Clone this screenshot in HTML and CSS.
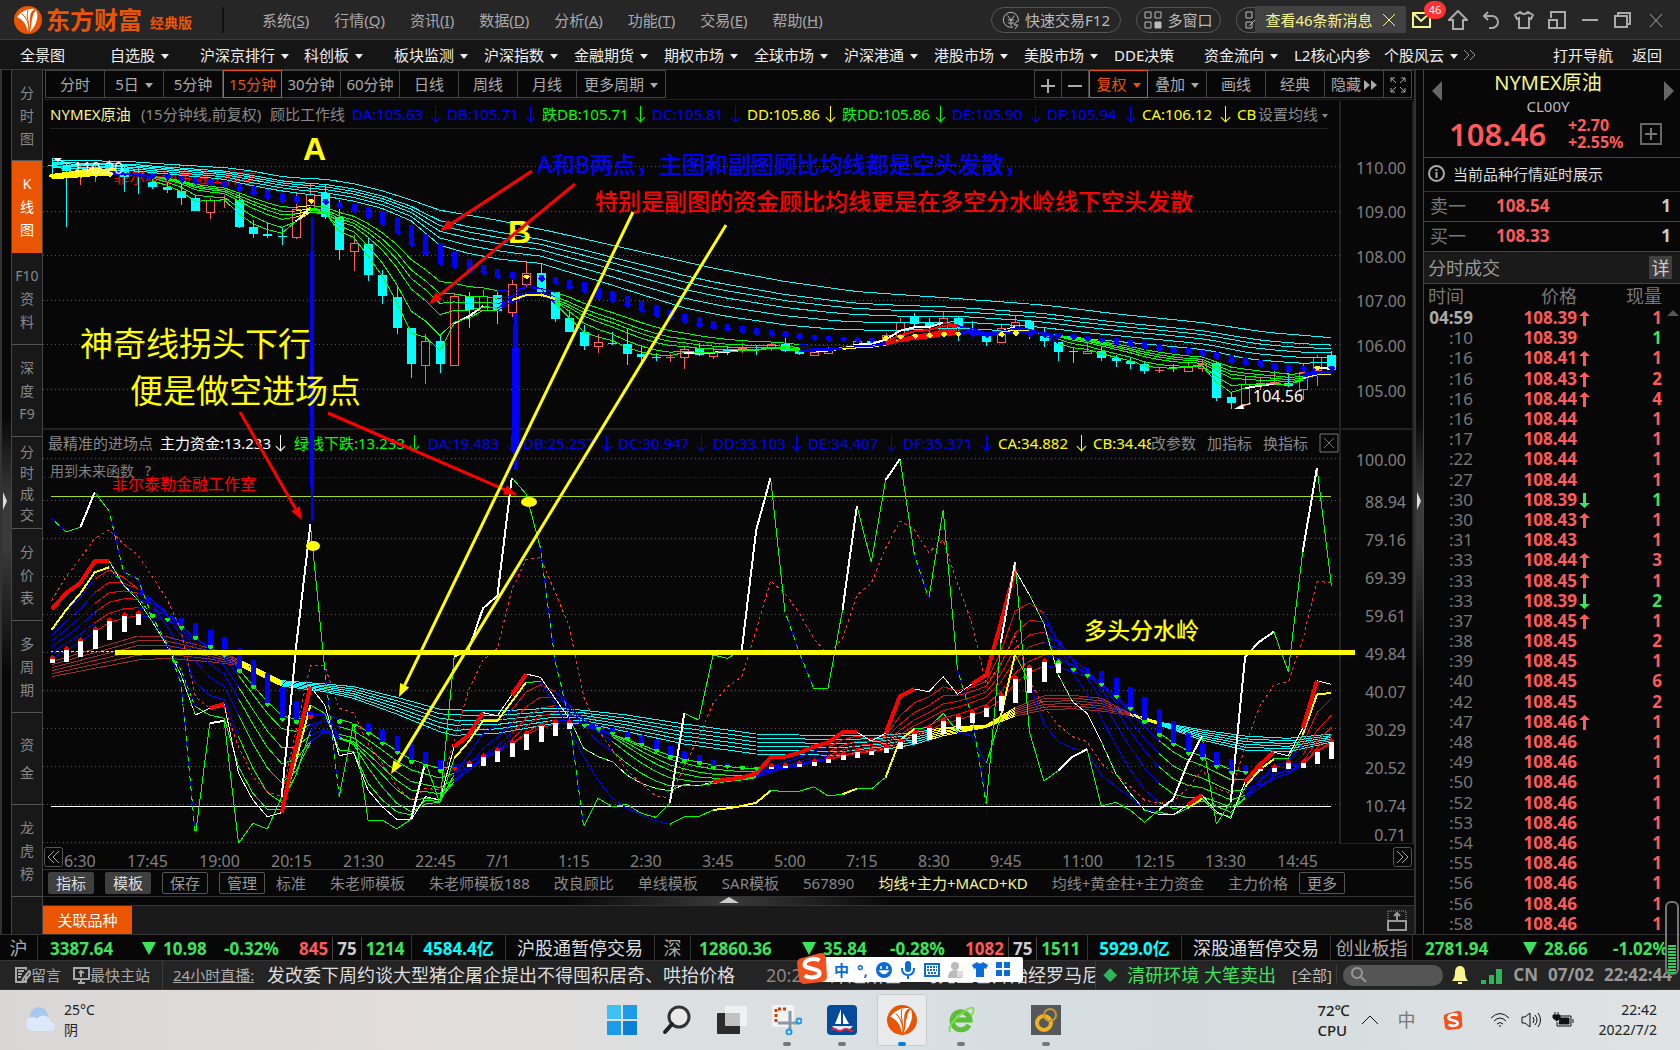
FILE: index.html
```html
<!DOCTYPE html>
<html lang="zh-CN">
<head>
<meta charset="utf-8">
<title>东方财富经典版 - NYMEX原油</title>
<link rel="stylesheet" href="styles.css">
</head>
<body>
<svg class="defs" aria-hidden="true">
  <symbol id="flame" viewBox="0 0 28 28"><ellipse cx="14" cy="14" rx="14" ry="14" fill="#ea5504"/><path d="M3 11C8 5 14 2 21 3c-4 2-5 5-5 10 0 5 0 9-2 13-2-7-3-11-11-15z" fill="#fff"/><path d="M8 8c5 4 7 9 7 18M14 4c-2 6 1 12 1 20" stroke="#ea5504" stroke-width="1" fill="none"/><path d="M22 4c3 5 1 15-6 22 2-8 1-16 6-22z" fill="#fff"/></symbol>
  <symbol id="sogou" viewBox="0 0 30 30"><path d="M4 6 23 1q4 0 5 4l1 18q0 4-4 5L8 30q-4 0-5-4L1 11q0-4 3-5z" fill="#f4511e"/><path d="M22 8C17 5 8 7 8 12c0 4 14 3 14 8 0 4-9 5-14 2" fill="none" stroke="#fff" stroke-width="4"/></symbol>
</svg>

<header class="titlebar">
  <div class="brand"><svg width="28" height="28"><use href="#flame"/></svg><b>东方财富</b><span>经典版</span></div>
  <nav class="menus">
    <a href="#">系统(<u>S</u>)</a><a href="#">行情(<u>Q</u>)</a><a href="#">资讯(<u>I</u>)</a><a href="#">数据(<u>D</u>)</a><a href="#">分析(<u>A</u>)</a><a href="#">功能(<u>T</u>)</a><a href="#">交易(<u>E</u>)</a><a href="#">帮助(<u>H</u>)</a>
  </nav>
  <div class="tools">
    <button class="pill trade"><svg width="18" height="18" viewBox="0 0 18 18"><path d="M11 16A7.500 7.500 0 1 1 16 11M5.500 4.500 9 9l3.500-4.500M9 9v6M6 9h6M6 12h6M15 10l-3 4h4l-3 4"/></svg>快速交易F12</button>
    <button class="pill multi"><svg width="18" height="18" viewBox="0 0 18 18"><path d="M1 1h6v6H1zM11 1h6v6h-6zM1 11h6v6H1z"/><path d="M11 11h6v6h-6z" fill="#bbb"/></svg>多窗口</button>
    <button class="pill more" aria-label="布局"><svg width="18" height="18" viewBox="0 0 18 18"><path d="M1 1h6v6H1zM1 11h6v6H1zM4 15l6-6"/></svg></button>
    <div class="toast">查看46条新消息<button aria-label="关闭"><svg width="14" height="14" viewBox="0 0 14 14"><path d="M1 1l12 12M13 1L1 13"/></svg></button></div>
    <button class="ic mail" aria-label="消息"><svg width="20" height="20" viewBox="0 0 20 20"><path d="M1 3h17v14H1zM1 3l8 8 9-8"/></svg><i>46</i></button>
    <button class="ic" aria-label="主页"><svg width="20" height="20" viewBox="0 0 20 20"><path d="M10 1 1 10h4v9h10v-9h4z"/></svg></button>
    <button class="ic" aria-label="返回"><svg width="20" height="20" viewBox="0 0 20 20"><path d="M7 2 3 6l4 4M3 6h8a6 6 0 0 1 0 12H8"/></svg></button>
    <button class="ic" aria-label="皮肤"><svg width="20" height="20" viewBox="0 0 20 20"><path d="M6 2 1 5l2 4 2-1v10h10V8l2 1 2-4-5-3q-4 4-8 0z"/></svg></button>
    <button class="ic" aria-label="小窗"><svg width="20" height="20" viewBox="0 0 20 20"><path d="M4 8V2h14v16h-8M2 10h8v8H2z"/></svg></button>
    <button class="ic" aria-label="最小化"><svg width="20" height="20" viewBox="0 0 20 20"><path d="M2 10h16"/></svg></button>
    <button class="ic" aria-label="还原"><svg width="20" height="20" viewBox="0 0 20 20"><path d="M2 6h12v11H2zM5 6V3h12v11h-3"/></svg></button>
    <button class="ic thin" aria-label="关闭"><svg width="20" height="20" viewBox="0 0 20 20"><path d="M4 4l12 13M16 4L4 17"/></svg></button>
  </div>
</header>

<nav class="navbar">
  <a href="#">全景图</a><a href="#" class="dd">自选股</a><a href="#" class="dd wide">沪深京排行</a><a href="#" class="dd">科创板</a><a href="#" class="dd">板块监测</a><a href="#" class="dd">沪深指数</a><a href="#" class="dd">金融期货</a><a href="#" class="dd">期权市场</a><a href="#" class="dd">全球市场</a><a href="#" class="dd">沪深港通</a><a href="#" class="dd">港股市场</a><a href="#" class="dd">美股市场</a><a href="#">DDE决策</a><a href="#" class="dd">资金流向</a><a href="#">L2核心内参</a><a href="#" class="dd fit">个股风云</a>
  <svg width="14" height="12" viewBox="0 0 14 12"><path d="M1 1l5 5-5 5M7 1l5 5-5 5" fill="none" stroke="#999"/></svg>
  <span class="navright"><a href="#">打开导航</a><a href="#">返回</a></span>
</nav>

<main class="desk">
  <div class="strip"></div>
  <aside class="side">
    <a href="#">分<br>时<br>图</a><a href="#" class="on">K<br>线<br>图</a><a href="#">F10<br>资<br>料</a><a href="#">深<br>度<br>F9</a><a href="#" class="four">分<br>时<br>成<br>交</a><a href="#">分<br>价<br>表</a><a href="#">多<br>周<br>期</a><a href="#" class="two">资<br>金</a><a href="#">龙<br>虎<br>榜</a>
  </aside>
  <section class="work">
    <div class="periods">
      <div class="group"><button>分时</button><button class="dd">5日</button><button>5分钟</button><button class="on">15分钟</button><button>30分钟</button><button>60分钟</button><button>日线</button><button>周线</button><button>月线</button><button class="dd big">更多周期</button></div>
      <div class="group"><button class="sq" aria-label="放大"><svg width="16" height="16" viewBox="0 0 16 16"><path d="M1 8h14M8 1v14"/></svg></button><button class="sq" aria-label="缩小"><svg width="16" height="16" viewBox="0 0 16 16"><path d="M1 8h14"/></svg></button><button class="on dd">复权</button><button class="dd">叠加</button><button>画线</button><button>经典</button><button>隐藏<svg class="ff" width="13" height="12" viewBox="0 0 13 12"><path d="M0 1l6 5-6 5zM7 1l6 5-6 5z"/></svg></button><button class="sq" aria-label="全屏"><svg width="18" height="18" viewBox="0 0 18 18"><path d="M2 6V2h4M2 2l5 5M12 2h4v4M16 2l-5 5M2 12v4h4M2 16l5-5M12 16h4v-4M16 16l-5-5"/></svg></button></div>
    </div>
    <div class="chart">
      <div class="legend main">
        <span class="name">NYMEX原油</span><span class="desc">(15分钟线,前复权)</span><span class="desc">顾比工作线</span>
        <span class="v b">DA:105.63<i></i></span><span class="v b">DB:105.71<i></i></span><span class="v g w">跌DB:105.71<i></i></span><span class="v b">DC:105.81<i></i></span><span class="v y">DD:105.86<i></i></span><span class="v g w">跌DD:105.86<i></i></span><span class="v b">DE:105.90<i></i></span><span class="v b">DF:105.94<i></i></span><span class="v y">CA:106.12<i></i></span><span class="v y cut">CB</span>
        <button class="dd">设置均线</button>
      </div>
      <div class="legend sub">
        <span class="desc">最精准的进场点</span><span class="v wh x">主力资金:13.233<i></i></span><span class="v g x">绿线下跌:13.233<i></i></span><span class="v b">DA:19.483<i></i></span><span class="v b">DB:25.257<i></i></span><span class="v b">DC:30.947<i></i></span><span class="v b">DD:33.103<i></i></span><span class="v b">DE:34.407<i></i></span><span class="v b">DF:35.371<i></i></span><span class="v y">CA:34.882<i></i></span><span class="v y cut">CB:34.48</span>
        <button>改参数</button><button>加指标</button><button>换指标</button><button class="close" aria-label="关闭指标"><svg width="20" height="20" viewBox="0 0 20 20"><path d="M1 1h18v18H1zM5 5l10 10M15 5L5 15" fill="none" stroke="#777"/></svg></button>
      </div>
      <svg id="chart" viewBox="43 100 1371 769"></svg>
    </div>
    <div class="templates">
      <button class="fill">指标</button><button class="fill">模板</button><button>保存</button><button>管理</button>
      <div class="tabs"><a href="#">标准</a><a href="#">朱老师模板</a><a href="#">朱老师模板188</a><a href="#">改良顾比</a><a href="#">单线模板</a><a href="#">SAR模板</a><a href="#">567890</a><a href="#" class="on">均线+主力+MACD+KD</a><a href="#">均线+黄金柱+主力资金</a><a href="#">主力价格</a></div>
      <button>更多</button>
    </div>
    <div class="split"><svg width="20" height="6" viewBox="0 0 20 6"><path d="M0 6 10 0l10 6z" fill="#ccc"/></svg></div>
    <div class="related"><button>关联品种</button><svg width="20" height="21" viewBox="0 0 20 21"><path d="M1 11h18v9H1zM10 10V3M7 6l3-3 3 3" fill="none" stroke="#999" stroke-width="2"/><path d="M1 10V1h18v9" fill="none" stroke="#999" stroke-dasharray="1 1"/></svg></div>
  </section>
  <div class="strip right"></div>
  <aside class="quote">
    <div class="head">
      <button class="tri l" aria-label="上一个"></button>
      <div class="title"><strong>NYMEX原油</strong><span>CL00Y</span></div>
      <button class="tri r" aria-label="下一个"></button>
      <div class="price"><b>108.46</b><span>+2.70<br>+2.55%</span><button aria-label="加自选"><svg width="22" height="22" viewBox="0 0 22 22"><path d="M1 1h20v20H1z" fill="none" stroke="#666" stroke-width="2"/><path d="M5 11h12M11 5v12" stroke="#777" stroke-width="2"/></svg></button></div>
    </div>
    <div class="info"><svg width="17" height="17" viewBox="0 0 17 17"><circle cx="8.500" cy="8.500" r="7.500"/><path d="M8.500 7v6M8.500 4v2"/></svg>当前品种行情延时展示</div>
    <div class="lvl"><span>卖一</span><b>108.54</b><em>1</em></div>
    <div class="lvl"><span>买一</span><b>108.33</b><em>1</em></div>
    <div class="bar">分时成交<button>详</button></div>
    <table class="ticks"><thead><tr><th>时间</th><th>价格</th><th>现量</th></tr></thead><tbody id="ticks"></tbody></table>
    <i class="up"></i>
  </aside>
</main>

<section class="ticker">
  <span class="mk first">沪</span>
  <div class="idx a"><b class="pt">3387.64</b><b class="chg">10.98</b><b class="pct">-0.32%</b><b class="cnt"><i class="r">845</i><i class="n">75</i><i>1214</i></b></div>
  <span class="amt">4584.4亿</span><span class="hk">沪股通暂停交易</span>
  <span class="mk">深</span>
  <div class="idx b"><b class="pt">12860.36</b><b class="chg">35.84</b><b class="pct">-0.28%</b><b class="cnt"><i class="r">1082</i><i class="n">75</i><i>1511</i></b></div>
  <span class="amt">5929.0亿</span><span class="hk">深股通暂停交易</span>
  <span class="mk cyb">创业板指</span>
  <div class="idx c"><b class="pt">2781.94</b><b class="chg">28.66</b><b class="pct">-1.02%</b></div>
</section>

<section class="news">
  <a href="#" class="ico"><svg width="17" height="17" viewBox="0 0 17 17"><path d="M12 9v6H2V1h10v2M4 4h6M4 7h4M4 10h3M15 4l-6 8-1 3 3-1 6-8z"/></svg>留言</a>
  <a href="#" class="ico"><svg width="17" height="17" viewBox="0 0 17 17"><path d="M1 1h15v11H1zM5 16h7M8 12v4M8 10V4M6 6l2-2 3 2"/></svg>最快主站</a>
  <div class="feed"><a href="#" class="live">24小时直播:</a><a href="#">发改委下周约谈大型猪企屠企提出不得囤积居奇、哄抬价格</a><span class="tm">20:24</span><a href="#" class="nx">泽连斯基：乌克兰已开始经罗马尼</a></div>
  <div class="alert"><i>◆</i><a href="#">清研环境 大笔卖出</a><a href="#" class="all">[全部]</a></div>
  <label class="find"><svg width="16" height="16" viewBox="0 0 16 16"><circle cx="6" cy="6" r="5"/><path d="M10 10l5 5"/></svg><input type="text" aria-label="搜索"></label>
  <svg class="bell" width="18" height="20" viewBox="0 0 18 20"><path d="M1 16q3-3 3-9 0-5 4-6h2q4 1 4 6 0 6 3 9zM7 17h4v2H7z" fill="#f5f58c"/></svg>
  <svg class="sig" width="22" height="20" viewBox="0 0 22 20"><path d="M0 15h5v4H0zM8 10h5v9H8zM15 4h6v15h-6z" fill="#2fb55a"/></svg>
  <b>CN</b><b>07/02</b><b class="clock">22:42:44</b>
  <div class="ime"><svg class="lg" width="32" height="32"><use href="#sogou"/></svg><b>中</b><b>°,</b>
    <svg width="16" height="16" viewBox="0 0 16 16"><circle cx="8" cy="8" r="8" fill="#0a6cd6"/><path d="M4 9q4 5 8 0zM5 4v3M11 4v3" fill="#fff" stroke="#fff" stroke-width="1.500"/></svg>
    <svg width="16" height="18" viewBox="0 0 16 18"><rect x="5" y="0" width="6" height="11" rx="3" fill="#0a6cd6"/><path d="M2 7q0 7 6 7t6-7M8 14v4" fill="none" stroke="#0a6cd6" stroke-width="2"/></svg>
    <svg width="16" height="14" viewBox="0 0 16 14"><path d="M1 1h14v12H1z" fill="none" stroke="#0a6cd6" stroke-width="2"/><path d="M3 4h10M3 7h10M4 10h8" stroke="#0a6cd6" stroke-width="2" stroke-dasharray="2 1"/></svg>
    <svg width="16" height="16" viewBox="0 0 16 16"><circle cx="7" cy="4" r="4" fill="#bbb"/><path d="M0 16q0-8 7-8t7 8z" fill="#bbb"/><path d="M9 9h6v6H9z" fill="#ddd"/></svg>
    <svg width="16" height="15" viewBox="0 0 16 15"><path d="M5 0 0 3l2 4 2-1v9h8V6l2 1 2-4-5-3q-3 3-6 0z" fill="#0a6cd6"/></svg>
    <svg width="15" height="15" viewBox="0 0 15 15"><path d="M0 0h6v6H0zM8 0h6v6H8zM0 8h6v6H0zM8 8h6v6H8z" fill="#0a6cd6"/></svg>
  </div>
  <svg class="meter" width="14" height="74" viewBox="0 0 14 74"><rect x="1" y="1" width="12" height="72" rx="5" fill="#111" fill-opacity=".6" stroke="#777" stroke-width="2"/><path d="M7 44v28" stroke="#2fd05a" stroke-width="8" stroke-dasharray="2 1"/></svg>
</section>

<footer class="taskbar">
  <div class="weather"><svg width="32" height="32" viewBox="0 0 32 32"><circle cx="14" cy="12" r="9" fill="#a9c8f0"/><path d="M8 27a7 7 0 0 1 0-14q3 0 4 2 3-5 9-3 5 2 4 6 5 0 5 4 0 5-5 5z" fill="#dbe9fb"/></svg><span>25°C<br>阴</span></div>
  <div class="apps">
    <button aria-label="开始"><svg width="30" height="30" viewBox="0 0 30 30"><path d="M0 0h14v14H0z" fill="#3fc0f5"/><path d="M16 0h14v14H16zM0 16h14v14H0z" fill="#1c9be8"/><path d="M16 16h14v14H16z" fill="#0a7fd8"/></svg></button>
    <button aria-label="搜索"><svg width="30" height="30" viewBox="0 0 30 30"><circle cx="17" cy="12" r="10" fill="#e9e9e9" stroke="#333" stroke-width="3"/><path d="M10 19 3 27" stroke="#222" stroke-width="4" stroke-linecap="round"/></svg></button>
    <button aria-label="任务视图"><svg width="30" height="30" viewBox="0 0 30 30"><rect x="0" y="8" width="23" height="21" rx="1" fill="#2b2b2b"/><rect x="8" y="1" width="22" height="20" rx="1" fill="#f6f6f6" opacity=".75"/></svg></button>
    <button class="run" aria-label="截图工具"><svg width="30" height="30" viewBox="0 0 30 30"><rect width="22" height="22" rx="3" fill="#f3f3f3"/><path d="M4 17V4h12" fill="none" stroke="#d83b01" stroke-width="3" stroke-dasharray="3 2"/><path d="M18 6v19M6 18h20" stroke="#8a98a5" stroke-width="3"/><circle cx="27" cy="16" r="2.500" fill="none" stroke="#1c9be8" stroke-width="2"/><circle cx="17" cy="27" r="2.500" fill="none" stroke="#1c9be8" stroke-width="2"/></svg></button>
    <button class="run" aria-label="帆船"><svg width="30" height="30" viewBox="0 0 30 30"><rect width="30" height="30" rx="4" fill="#064a9c"/><path d="M14 4v15H8zM16 8l6 11h-6z" fill="#fff"/><path d="M5 21h21l-4 4H9z" fill="#dfe9f5"/><path d="M4 25q3-2 6 0t6 0 6 0 4 0" fill="none" stroke="#e0223a" stroke-width="2"/></svg></button>
    <button class="run active" aria-label="东方财富"><svg width="30" height="30"><use href="#flame"/></svg></button>
    <button class="run" aria-label="浏览器"><svg width="30" height="30" viewBox="0 0 30 30"><path d="M23 20A9 9 0 1 1 24 15H7" fill="none" stroke="#5bbf3a" stroke-width="5"/><path d="M4 27Q1 21 14 10 24 1 27 3q2 2-2 8" fill="none" stroke="#8bd85a" stroke-width="2"/></svg></button>
    <button class="run last" aria-label="金融终端"><svg width="30" height="30" viewBox="0 0 30 30"><path d="M0 0h30v30H0z" fill="#54585c"/><circle cx="13" cy="18" r="7" fill="none" stroke="#f2b21b" stroke-width="4"/><circle cx="19" cy="10" r="6" fill="none" stroke="#c99a2a" stroke-width="2"/></svg></button>
  </div>
  <div class="tray">
    <span class="cpu">72℃<br>CPU</span>
    <svg width="18" height="12" viewBox="0 0 18 12"><path d="M1 10l8-8 8 8"/></svg>
    <span class="zh">中</span>
    <svg class="so" width="20" height="20"><use href="#sogou"/></svg>
    <svg width="20" height="16" viewBox="0 0 20 16"><path d="M1 6q9-9 18 0M4 9q6-6 12 0M7 12q3-3 6 0M9 14h2"/></svg>
    <svg width="20" height="18" viewBox="0 0 20 18"><path d="M1 6h3l5-4v14l-5-4H1zM12 6q2 3 0 6M14 4q4 5 0 10M17 2q5 7 0 14"/></svg>
    <svg width="22" height="16" viewBox="0 0 22 16"><path d="M7 4h12v10H5v-4M3 0v4M6 0v4M21 7v4"/><path d="M1 3h7v3l-3 3-4-3zM8 6h9v6H7z" fill="#111"/></svg>
    <span class="date">22:42<br>2022/7/2</span>
  </div>
</footer>
<script src="chart.js"></script>
</body>
</html>
```
FILE: styles.css
```css
* { box-sizing: border-box; }
body { margin: 0; background: #070707; color: #aaa; font: 15px/20px "Noto Sans", "Noto Sans CJK SC", sans-serif; overflow-x: hidden; }
button { font: inherit; color: inherit; background: none; border: 0; padding: 0; margin: 0; white-space: nowrap; }
a { color: inherit; text-decoration: none; white-space: nowrap; }
i, em { font-style: normal; }
svg { flex: none; }
.defs { position: absolute; width: 0; height: 0; }
.dd::after { content: ""; display: inline-block; border: 4px solid transparent; border-top: 5px solid currentColor; border-bottom: 0; margin-left: 6px; vertical-align: 2px; }

/* title bar */
.titlebar { display: flex; align-items: center; height: 40px; background: #262626; border-bottom: 1px solid #3c3c3c; padding-left: 14px; }
.brand { display: flex; align-items: center; gap: 4px; width: 210px; color: #ea5504; height: 26px; border-right: 2px solid #111; }
.brand b { font-size: 24px; }
.brand span { font-size: 14px; font-weight: bold; margin: 6px 0 0 4px; }
.menus { display: flex; gap: 25px; padding-left: 38px; color: #aaa; }
.tools { display: flex; align-items: center; margin-left: auto; padding-right: 14px; color: #bbb; }
.tools svg { fill: none; stroke: #aaa; stroke-width: 2; }
.tools .thin svg { stroke-width: 1; }
.tools .pill svg { stroke: #bbb; stroke-width: 1; }
.pill { display: flex; align-items: center; justify-content: center; gap: 5px; height: 26px; border: 1px solid #555; border-radius: 13px; margin-right: 15px; }
.trade { width: 130px; }
.multi { width: 85px; }
.more { width: 19px; padding-left: 8px; border-right: 0; border-radius: 13px 0 0 13px; margin-right: 0; overflow: hidden; justify-content: flex-start; }
.toast { display: flex; align-items: center; justify-content: center; gap: 9px; width: 151px; height: 27px; background: #424242; color: #f5f58c; margin-right: 6px; }
.tools .toast svg { stroke: #f5f58c; stroke-width: 1; display: block; }
.ic { width: 20px; height: 20px; margin-right: 13px; position: relative; }
.ic:last-child { margin-right: 0; }
.ic svg { display: block; }
.mail { margin-right: 16px; }
.tools .mail svg { stroke: #f5f58c; }
.mail i { position: absolute; left: 12px; top: -9px; width: 22px; height: 18px; border-radius: 9px; background: #f33; color: #fff; font-size: 11px; line-height: 18px; }

/* market navigation */
.navbar { display: flex; align-items: center; height: 30px; background: #151515; border-bottom: 1px solid #3c3c3c; color: #eee; padding: 1px 18px 0 20px; }
.navbar > a { flex: 0 0 90px; }
.navbar > a.wide { flex-basis: 104px; }
.navbar > a.fit { flex-basis: 79px; }
.navright { display: flex; gap: 19px; margin-left: auto; }

/* workspace */
.desk { display: grid; grid-template-columns: 11px 32px minmax(0, 1fr) 9px 257px; }
.strip { background: linear-gradient(#070707 40%, #3a3a3a 50%, #3a3a3a 55%, #070707 70%); border-left: 2px solid #333; position: relative; }
.strip::after { content: ""; position: absolute; left: 1px; top: calc(50% - 10px); border: 9px solid transparent; border-left: 4px solid #ddd; border-right: 0; }
.side { background: #181818; border: solid #444; border-width: 0 1px; font-size: 14px; color: #888; }
.side a { display: block; height: 92px; padding-top: 11px; line-height: 23px; text-align: center; border-bottom: 1px solid #555; }
.side a:first-child { height: 91px; }
.side .on { background: #ea5504; color: #fff; border-color: #ea5504; }
.side .four { line-height: 21px; padding-top: 4px; }
.side .two { line-height: 28px; padding-top: 18px; }
.work { display: flex; flex-direction: column; min-width: 0; }
.periods { display: flex; justify-content: space-between; height: 30px; padding: 0 2px; border-bottom: 1px solid #222; color: #aaa; }
.group { display: flex; height: 28px; border: 1px solid #444; }
.group button { width: 59px; border-right: 1px solid #444; }
.group button:last-child { border-right: 0; }
.group .big { width: 88px; }
.group .sq { width: 27px; }
.group .on { color: #ea5504; border: 1px solid #ea5504; margin: -1px 0; }
.group svg { stroke: #aaa; stroke-width: 2; fill: none; vertical-align: middle; }
.group .ff { fill: #aaa; stroke: none; margin-left: 3px; vertical-align: -1px; }
.group .sq:last-child svg { stroke-width: 1; }

.chart { position: relative; }
.chart > svg { display: block; width: 100%; height: auto; position: relative; pointer-events: none; }
.legend { position: absolute; left: 7px; right: 86px; display: flex; align-items: center; white-space: nowrap; }
.legend.main { top: 0; height: 29px; border-bottom: 1px solid #222; }
.legend.sub { left: 5px; right: 75px; top: calc(100% - 437px); height: 22px; }
.name { color: #f5f58c; width: 91px; }
.desc { color: #888; margin-right: 7px; }
.main .desc:nth-child(2) { width: 122px; }
.v { flex: 0 0 95px; display: flex; align-items: center; justify-content: space-between; padding-right: 6px; }
.v.w { flex-basis: 110px; }
.v.x { flex-basis: 134px; padding-right: 8px; }
.v i { width: 1px; height: 16px; background: currentColor; position: relative; margin-right: 5px; }
.v i::after { content: ""; position: absolute; left: -3px; bottom: 1px; width: 6px; height: 6px; border: solid currentColor; border-width: 0 1px 1px 0; transform: rotate(45deg); }
.b { color: #00f; } .g { color: #0f0; } .y { color: #ff0; } .wh { color: #fff; }
.v.cut { flex: 1 1 0; min-width: 0; overflow: hidden; padding: 0; }
.legend button { color: #888; }
.legend.main .dd::after { border-width: 4px 3px 0; margin-left: 4px; }
.legend.sub button { margin-right: 11px; }
.legend.sub .close { margin-right: 0; height: 20px; }
#chart text { font-family: "Noto Sans", "Noto Sans CJK SC", sans-serif; font-size: 16px; }
#chart .cap { font-family: "Liberation Sans", sans-serif; font-weight: bold; font-size: 32px; }
#chart .note { font-size: 23px; font-weight: 500; }
#chart .shout { font-size: 33px; }
#chart .small { font-size: 14px; }

.templates { display: flex; align-items: center; height: 28px; border: solid #333; border-width: 1px 0; padding-left: 5px; gap: 11px; color: #888; }
.templates button { width: 46px; height: 22px; border: 1px solid #555; border-radius: 2px; color: #999; line-height: 18px; }
.templates .fill { background: #3f3f3f; border-color: #3f3f3f; color: #ddd; }
.tabs { display: flex; gap: 24px; }
.tabs .on { color: #f5f58c; }
.split { height: 8px; display: flex; justify-content: center; align-items: flex-start; background: linear-gradient(90deg, #070707 38%, #3a3a3a 50%, #070707 62%); }
.related { display: flex; justify-content: space-between; align-items: center; height: 29px; background: #1a1a1a; border-top: 1px solid #333; padding-right: 7px; }
.related button { width: 89px; height: 28px; background: #ea5504; color: #fff; }

/* quote panel */
.quote { border-left: 1px solid #444; display: flex; flex-direction: column; position: relative; }
.head { display: grid; grid-template-columns: 10px 1fr 10px; align-items: center; height: 88px; padding: 1px 6px 0 8px; border-bottom: 1px solid #444; }
.title { text-align: center; line-height: 22px; padding-right: 10px; }
.title strong { display: block; font-weight: normal; font-size: 20px; line-height: 24px; color: #f5f58c; }
.title span { color: #bbb; }
.tri { width: 10px; height: 20px; background: #666; align-self: start; margin-top: 10px; clip-path: polygon(100% 0, 0 50%, 100% 100%); }
.tri.r { clip-path: polygon(0 0, 100% 50%, 0 100%); }
.price { grid-column: 1 / -1; display: flex; align-items: center; height: 40px; padding: 0 12px 6px 17px; color: #ff5a5a; }
.price b { font-size: 31px; width: 119px; font-weight: 600; line-height: 30px; }
.price span { font-size: 16px; line-height: 17px; font-weight: bold; margin-right: auto; }
.price button, .price svg { display: block; }
.info { display: flex; align-items: center; gap: 8px; height: 34px; padding: 0 0 2px 4px; color: #ddd; border-bottom: 1px solid #333; }
.info svg { fill: none; stroke: #aaa; stroke-width: 2; }
.lvl { display: flex; align-items: center; height: 30px; padding: 0 9px 2px 6px; border-bottom: 1px solid #444; font-size: 18px; color: #777; }
.lvl span { width: 66px; }
.lvl b { font-size: 17px; color: #ff5a5a; }
.lvl em { margin-left: auto; font-size: 17px; font-weight: bold; color: #ccc; }
.bar { display: flex; justify-content: space-between; align-items: center; height: 32px; padding: 0 8px 0 4px; background: #1a1a1a; border-bottom: 1px solid #444; font-size: 18px; color: #999; }
.bar button { width: 23px; height: 23px; background: #3f3f3f; color: #ccc; line-height: 22px; }
.ticks { flex: 1; border-collapse: collapse; width: 100%; font-size: 17px; line-height: 20px; table-layout: fixed; }
.ticks th { font-size: 18px; font-weight: normal; color: #777; height: 24px; padding: 0; text-align: right; }
.ticks td { position: relative; padding: 0; text-align: right; font-weight: bold; color: #ff5a5a; }
.ticks tr > :first-child { width: 49px; font-weight: normal; color: #777; }
.ticks tr > :nth-child(2) { width: 104px; }
.ticks tr > :last-child { padding-right: 18px; }
.ticks th:first-child { padding-right: 9px; }
.ticks tbody tr:first-child td:first-child { font-weight: bold; color: #aaa; }
.ticks .dn { color: #3de35c; }
.ticks svg { position: absolute; left: 106px; top: 3px; }
.up { position: absolute; right: 1px; top: 240px; border: 6px solid transparent; border-bottom-color: #555; border-top: 0; }

/* index ticker */
.ticker { display: flex; height: 27px; border: solid #333; border-width: 1px 0; font-size: 17px; color: #3de35c; line-height: 27px; white-space: nowrap; overflow: hidden; }
.ticker > * { border-right: 1px solid #333; flex: none; }
.mk { width: 36px; font-size: 18px; color: #aaa; text-align: center; }
.first { width: 38px; }
.cyb { width: 82px; }
.idx { display: flex; padding-left: 12px; }
.idx.a { width: 374px; } .idx.b { width: 397px; padding-left: 8px; color: inherit; } .idx.c { flex: 1 0 0; border: 0; }
.pt { width: 92px; }
.b .pt { width: 103px; }
.chg { width: 82px; }
.b .chg { width: 88px; }
.c .pt { width: 98px; } .c .chg { width: 90px; }
.chg::before { content: ""; display: inline-block; border: 7px solid transparent; border-top: 13px solid; border-bottom: 0; margin-right: 7px; }
.pct { width: 75px; }
.cnt i + i { border-left: 1px solid #444; margin-left: 4px; padding-left: 4px; }
.cnt .r { color: #ff5a5a; } .cnt .n { color: #ccc; }
.amt { width: 94px; color: #0ff; font-weight: bold; text-align: center; }
.hk { width: 149px; font-size: 18px; color: #ddd; text-align: center; }

/* news line */
.news { position: relative; display: flex; align-items: center; height: 29px; background: #242424; border-bottom: 1px solid #333; color: #aaa; padding-left: 14px; font-size: 17px; }
.ico { display: flex; align-items: center; font-size: 15px; margin-right: 12px; }
.ico svg { fill: none; stroke: #aaa; stroke-width: 2; }
.feed { flex: 1 1 0; min-width: 0; height: 28px; display: flex; align-items: center; overflow: hidden; border: solid #3c3c3c; border-width: 0 1px; padding-left: 10px; font-size: 18px; color: #ddd; }
.live { font-size: 15px; width: 94px; text-decoration: underline; color: #aaa; flex: none; }
.feed .tm { color: #888; margin: 0 18px 0 31px; }
.alert { display: flex; align-items: center; width: 241px; padding-left: 7px; margin-right: 6px; border-right: 1px solid #3c3c3c; color: #3de35c; font-size: 18px; }
.alert i { width: 24px; font-size: 14px; color: #2fb55a; }
.all { font-size: 15px; color: #bbb; margin-left: 16px; }
.find { display: flex; align-items: center; width: 100px; height: 21px; border-radius: 10px; background: #555; padding-left: 8px; }
.find svg { fill: none; stroke: #999; stroke-width: 2; }
.find input { width: 70px; border: 0; background: none; color: #ddd; outline: 0; }
.bell { margin: 0 12px 0 8px; }
.news > b { margin-left: 10px; color: #999; }
.news .clock { width: 76px; }
.ime { position: absolute; left: 815px; top: -4px; width: 208px; height: 25px; background: #fff; border-radius: 2px; display: flex; align-items: center; gap: 8px; padding-left: 19px; color: #0a6cd6; }
.ime .lg { position: absolute; left: -19px; top: -5px; }
.ime b { font-size: 15px; }
.meter { position: absolute; right: 1px; bottom: 14px; }

/* desktop taskbar */
.taskbar { display: grid; grid-template-columns: 1fr auto 1fr; align-items: center; height: 60px; background: linear-gradient(90deg, #d9d7d6, #e2dddb 25%, #dae0e3 50%, #d4dcdf 70%, #e0e2e3); color: #222; line-height: 20px; }
.weather { display: flex; align-items: center; gap: 7px; padding-left: 25px; font-size: 14px; }
.apps { display: flex; padding-right: 12px; }
.apps button { width: 55px; height: 52px; display: flex; align-items: center; justify-content: center; position: relative; }
.run::after { content: ""; position: absolute; bottom: 0; width: 8px; height: 4px; border-radius: 2px; background: #777; }
.apps .active { background: #e8eaeb; border-radius: 4px; box-shadow: inset 0 0 0 1px #ccc; width: 50px; margin: 0 7px; }
.apps .last { margin-left: 30px; }
.active.run::after { background: #0a7fd8; }
.tray { display: flex; align-items: center; justify-content: flex-end; gap: 11px; padding-right: 23px; font-size: 14px; }
.tray svg { fill: none; stroke: #111; stroke-width: 1; }
.tray .so { stroke: none; margin: 0 16px; }
.cpu { font-size: 15px; font-weight: 500; }
.zh { font-size: 18px; color: #777; margin-left: 8px; }
.date { text-align: right; margin-left: 14px; }
```
FILE: chart.js
```js
// Bar spacing of both panes and the two vertical scales.
const X = i => 51.6 + 14.38 * i;
const U = p => 100 + p / 3;
const L = p => 430 + p / 3;
const out = [];
const add = s => out.push(s);
const line = (x1, y1, x2, y2, c, w = 1, extra = '') =>
  add(`<path d="M${x1.toFixed(1)} ${y1.toFixed(1)}L${x2.toFixed(1)} ${y2.toFixed(1)}" fill="none" stroke="${c}" stroke-width="${w}" ${extra}/>`);
const poly = (pts, c, w = 1, extra = '') =>
  add(`<path d="M${pts.map(p => p[0].toFixed(1) + ' ' + p[1].toFixed(1)).join('L')}" fill="none" stroke="${c}" stroke-width="${w}" stroke-linejoin="bevel" ${extra}/>`);
const rect = (x, y, w, h, fill, extra = '') =>
  add(`<rect x="${x}" y="${y}" width="${w}" height="${h}" fill="${fill}" ${extra}/>`);
const text = (x, y, s, fill, cls = '', extra = '') =>
  add(`<text x="${x}" y="${y}" fill="${fill}" class="${cls}" ${extra}>${s}</text>`);
const seg = (arr, a, b, map, c, w, extra) => {
  const pts = [];
  for (let i = a; i <= b; i++) pts.push([X(i), map(arr[i])]);
  poly(pts, c, w, extra);
};
const interp = (pts, x) => {
  for (let k = 1; k < pts.length; k++) if (x <= pts[k][0]) {
    const [a, b] = [pts[k - 1], pts[k]];
    return a[1] + (b[1] - a[1]) * (x - a[0]) / (b[0] - a[0]);
  }
  return pts[pts.length - 1][1];
};
const ema = (src, n, seed) => {
  const k = 2 / (n + 1), r = [];
  src.forEach((v, i) => r.push(i ? r[i - 1] + k * (v - r[i - 1]) : seed));
  return r;
};
const parse = s => s.split(/\s+/).map(t => t.split(',').map(Number));

add('<g shape-rendering="crispEdges">');
// frame and grid
line(43, 428.5, 1413, 428.5, '#222', 2);
line(1339.5, 101, 1339.5, 844, '#222', 2);
line(1412.5, 101, 1412.5, 844, '#222', 2);
line(1340, 843.5, 1413, 843.5, '#222', 1);
[200, 334, 467, 601, 734, 869].forEach(p => line(43, Math.floor(U(p)) + .5, 1343, Math.floor(U(p)) + .5, '#555', 1, 'stroke-dasharray="1 3"'));
[85, 211, 325, 439, 553, 667, 781, 895, 1009, 1123, 1237].forEach(p => line(43, Math.floor(L(p)) + .5, 1343, Math.floor(L(p)) + .5, '#555', 1, 'stroke-dasharray="1 3"'));

text(113, 183, '菲尔泰勒金融工作室', '#f00');

// candles: kind (0 falling, 1 rising), high, top, bottom, low
const candles = parse(`0,175,195,198,232 0,190,197,213,380 1,195,205,225,255 1,195,200,220,245 0,180,188,215,225 0,195,205,232,275 0,205,218,223,282 0,235,245,262,266 0,250,261,270,278 0,250,273,293,315
0,285,293,333,333 1,295,300,335,357 1,285,297,300,323 0,280,300,381,384 0,360,381,402,413 0,367,402,407,415 0,385,408,410,434 1,280,328,410,416 1,250,283,327,335 0,253,279,351,357
0,300,351,450,480 1,405,430,452,513 0,412,432,525,543 0,511,525,588,612 0,560,591,684,702 0,684,684,792,834 1,702,724,794,852 0,705,724,792,819 1,580,587,794,797 0,576,587,630,684
1,570,587,630,632 0,576,585,632,672 1,540,553,635,651 1,486,520,553,560 0,490,519,575,590 0,575,577,656,665 0,630,655,696,696 0,675,696,738,749 1,702,727,739,758 0,696,728,732,735
0,686,732,762,795 0,735,762,770,783 0,760,770,773,783 1,763,770,773,786 1,742,748,772,806 0,729,745,764,768 1,745,755,767,776 0,738,750,753,765 1,730,745,748,758 0,738,747,750,765
1,729,733,745,753 0,714,733,753,755 0,745,753,762,766 1,745,755,764,765 1,740,748,758,760 1,735,740,745,748 1,718,722,738,740 0,718,722,730,735 1,700,706,725,728 1,655,665,706,708
0,638,648,672,685 0,655,670,680,695 1,636,655,690,695 0,648,655,685,722 0,662,690,693,700 0,700,708,725,738 1,672,685,725,727 1,645,665,690,700 0,660,663,695,717 0,685,708,723,741
0,725,727,755,783 0,745,753,756,788 1,725,753,758,760 0,740,753,774,783 0,765,774,783,800 0,770,783,792,807 0,785,792,813,822 1,800,810,814,820 0,792,802,805,816 1,785,802,812,815
1,780,792,803,815 0,788,790,894,903 0,878,891,909,927 1,830,852,911,911 1,833,850,855,870 1,810,846,851,855 0,820,848,858,862 1,790,817,866,900 1,765,770,810,858 0,753,765,810,810`);
candles.forEach(([up, hi, top, bot, lo], i) => {
  const x = Math.round(X(i)), c = up ? '#ff5f5f' : '#0ff';
  const y = Math.round(U(top)), h = Math.max(1, Math.round(U(bot)) - y);
  line(x + .5, U(hi), x + .5, U(lo), c);
  if (up && h > 1) rect(x - 3.5, y + .5, 8, h, '#070707', `stroke="${c}"`);
  else rect(x - 4, y, 9, h, c);
});

// long moving averages of the price
const hiPts = parse('51,181 107,183 132,185 168,193 225,203 250,212 286,232 325,238 352,250 382,272 411,300 439,330 496,360 560,400 614,437 714,505 786,545 857,575 921,588 1000,605 1050,617 1117,642 1200,667 1267,697 1331,713');
const loPts = parse('51,203 132,212 168,222 225,238 250,256 286,275 325,289 352,302 382,325 411,362 439,435 468,460 500,478 541,490 564,512 596,540 643,585 686,625 729,650 786,675 836,688 893,692 957,684 1033,697 1083,715 1167,738 1207,750 1250,778 1300,790 1331,787');
[0, .3, .44, .6, .79, 1].forEach(f => {
  const pts = [];
  for (let i = 0; i < 90; i++) { const a = interp(hiPts, X(i)), b = interp(loPts, X(i)); pts.push([X(i), U(a + (b - a) * f)]); }
  poly(pts, '#0ff');
});
// short moving averages of the price
const closes = candles.map(c => c[0] ? c[2] : c[3]);
const zones = [[0, 4, '#ff0', 2], [4, 7, '#00f', 1], [7, 17, '#0f0', 1], [17, 18, '#ff0', 1], [18, 31, '#0f0', 1], [31, 35, '#00f', 1], [35, 52, '#0f0', 1], [52, 58, '#00f', 1], [58, 63, '#f00', 2], [63, 70, '#00f', 1], [70, 87, '#0f0', 1], [87, 89, '#00f', 2]];
[3, 5, 8, 10, 12, 15].forEach((n, k) => {
  const e = ema(closes, n, 225 + k * 2);
  zones.forEach(z => seg(e, z[0], z[1], U, z[2], z[3]));
  if (k < 1) [[44, 48], [53, 62], [83, 85], [28, 30], [17, 18], [66, 67], [88, 89]].forEach(r => seg(e, r[0], r[1], U, '#fff', 2));
  if (k === 3) [[32, 35], [55, 59], [87, 89], [66, 68]].forEach(r => seg(e, r[0], r[1], U, '#ff0', 2));
});
poly([[51, U(228)], [80, U(222)], [115, U(207)]], '#ff0', 3);

// trend capsules: bar index, top, bottom
const caps = parse('5,218,226 6,220,228 7,222,235 8,223,238 9,228,245 10,235,252 11,238,255 12,243,262 13,252,272 14,258,285 15,267,297 16,280,305 17,288,308 19,297,313 20,305,325 21,312,335 22,322,355 23,334,375 24,352,402 25,376,438 26,402,465 27,430,495 28,457,505 29,478,515 30,496,522 31,508,535 32,517,538 34,525,543 35,531,552 36,540,567 37,546,580 38,565,597 39,573,607 40,588,622 41,603,637 42,616,650 43,630,658 44,642,670 45,652,680 46,663,686 47,672,692 48,678,698 49,684,705 50,690,708 51,694,710 52,700,716 53,706,721 54,709,724 55,710,724 56,711,725 57,713,727 64,697,709 65,698,712 68,694,708 69,696,710 70,698,712 71,703,716 72,708,722 73,713,727 74,714,735 75,720,740 76,726,746 77,733,752 78,740,758 79,745,763 80,750,768 81,757,778 82,766,790 83,770,796 84,780,802 85,790,810 86,796,816 87,798,813 89,797,811');
caps.forEach(([i, a, b]) => { const x = Math.round(X(i)); add(`<path d="M${x - 2} ${Math.round(U(a))}h5V${Math.round(U(b)) - 3}h1v1l-3 3h-1l-3-3v-1h1z" fill="#00f"/>`); });
parse('0,228 1,228 2,225 3,223 4,222 18,302 33,530 58,714 59,710 60,707 61,706 62,702 63,701 66,703 67,699 88,803').forEach(([i, p]) => { const x = X(i), y = U(p); add(`<path d="M${x - 3} ${y}l2-2h3l2 2-3 3z" fill="#ff0"/>`); });

// ---- lower pane ----
line(51, 496.5, 1331, 496.5, '#a8dc20');
line(43, 477.5, 1331, 477.5, '#00f', 1, 'stroke-dasharray="3 2"');
line(51, 806.5, 1331, 806.5, '#fff');
line(51, 651.5, 115, 651.5, '#ff0', 1, 'stroke-dasharray="3 2"');

// long averages
const lt = parse('0,695 6,618 8,620 11,655 13,688 16,752 19,762 21,770 24,802 27,838 31,843 35,834 37,841 40,855 44,882 49,912 55,918 58,915 60,908 62,893 65,885 67,833 69,798 71,796 73,805 75,850 77,876 80,900 83,918 86,925 89,912');
const lb = parse('0,740 6,690 8,685 11,695 13,706 16,768 19,785 21,805 24,852 27,905 28,916 31,910 35,880 37,880 40,905 44,942 49,972 55,976 58,958 60,943 62,917 65,892 67,858 69,840 71,836 73,843 75,856 77,884 80,930 83,960 86,965 89,937');
[0, .2, .4, .6, .8, 1].forEach(f => {
  const a = [];
  for (let i = 0; i < 90; i++) { const t = interp(lt, i), b = interp(lb, i); a.push(t + (b - t) * f); }
  [[0, 13, '#a52a2a'], [13, 16, '#ff0'], [16, 61, '#0ff'], [61, 67, '#ff0'], [67, 75, '#a52a2a'], [75, 77, '#ff0'], [77, 89, '#0ff']].forEach(z => seg(a, z[0], z[1], L, z[2], 1));
});

const fast = [538, 490, 458, 393, 393, 465, 510, 575, 645, 735, 855, 835, 822, 1030, 1110, 1160, 1148, 950, 770, 825, 977, 968, 1080, 1130, 1168, 1170, 1100, 1110, 950, 915, 848, 857, 795, 732, 742, 805, 865, 955, 980, 995, 1035, 1060, 1075, 1083, 1063, 1068, 1055, 1048, 1043, 1030, 982, 980, 968, 950, 938, 907, 907, 933, 910, 798, 777, 785, 740, 793, 762, 735, 580, 420, 495, 580, 735, 815, 850, 935, 1030, 1090, 1140, 1153, 1155, 1125, 1095, 1145, 1165, 1055, 1005, 967, 977, 895, 752, 763];
const mz = [[0, 3, '#00f'], [3, 6, '#f00'], [6, 13, '#00f'], [13, 18, '#0f0'], [18, 20, '#00f'], [20, 28, '#0f0'], [28, 32, '#00f'], [32, 35, '#f00'], [35, 39, '#00f'], [39, 49, '#0f0'], [49, 54, '#00f'], [54, 69, '#f00'], [69, 77, '#00f'], [77, 83, '#0f0'], [83, 87, '#00f'], [87, 89, '#f00']];
[3, 5, 7, 9, 12, 15].forEach((n, k) => { const e = ema(fast, n, 600 + 17 * k); mz.forEach(z => seg(e, z[0], z[1], L, z[2], 1)); });

// second line, yellow where it turns up
const second = [600, 540, 490, 427, 412, 465, 500, 560, 640, 720, 830, 855, 865, 1010, 1090, 1138, 1138, 990, 825, 850, 960, 965, 1060, 1110, 1145, 1155, 1110, 1115, 985, 935, 873, 873, 815, 757, 755, 820, 900, 980, 1050, 1105, 1135, 1155, 1172, 1183, 1160, 1160, 1140, 1135, 1128, 1118, 1082, 1084, 1084, 1070, 1098, 1093, 1076, 1077, 1042, 930, 897, 892, 850, 905, 918, 1000, 860, 672, 760, 880, 935, 955, 963, 1035, 1070, 1100, 1138, 1147, 1155, 1135, 1105, 1150, 1160, 1070, 1020, 987, 985, 915, 793, 789];
seg(second, 0, 89, L, '#0f0', 1);
[[4, 10], [34, 43], [63, 65], [68, 77]].forEach(r => seg(second, r[0], r[1], L, '#00f', 1, r[0] === 4 ? 'stroke-dasharray="4 3"' : ''));
[[0, 4], [16, 18], [28, 33], [46, 50], [55, 56], [58, 60], [66, 67], [79, 80], [83, 85], [87, 89]].forEach(r => seg(second, r[0], r[1], L, '#ff0', 2));
seg(fast, 0, 89, L, '#fff', 1);
[[4, 10], [36, 46], [68, 71], [73, 77]].forEach(r => seg(fast, r[0], r[1], L, '#0f0', 1, 'stroke-dasharray="5 4"'));
[[0, 4], [11, 12], [16, 18], [28, 30], [32, 33], [46, 56], [58, 60], [64, 67], [79, 80], [83, 85], [87, 88]].forEach(r => seg(fast, r[0], r[1], L, '#f00', 4));

// dashed smoothing of the main line
const smooth = [513, 440, 385, 325, 300, 342, 375, 440, 505, 600, 800, 835, 830, 950, 1040, 1085, 1100, 900, 707, 708, 835, 848, 940, 1000, 1070, 1110, 1075, 1080, 930, 780, 690, 655, 480, 388, 383, 485, 590, 800, 900, 960, 1020, 1060, 1098, 1103, 1010, 920, 820, 770, 740, 600, 453, 490, 550, 625, 675, 625, 495, 460, 355, 273, 300, 367, 330, 460, 580, 765, 700, 618, 750, 830, 885, 920, 935, 1000, 1035, 1070, 1110, 1120, 1115, 1075, 1020, 1075, 1090, 950, 830, 765, 755, 630, 455, 457];
seg(smooth, 0, 89, L, '#f33', 1, 'stroke-dasharray="3 3"');

// main line
const main = [265, 306, 292, 187, 243, 425, 447, 560, 640, 760, 1216, 880, 872, 1240, 1180, 1197, 1100, 650, 283, 720, 1100, 880, 1170, 1170, 1197, 1168, 995, 1120, 680, 660, 535, 497, 143, 192, 355, 690, 870, 1190, 1105, 1130, 1123, 1150, 1162, 1120, 850, 870, 675, 685, 660, 300, 143, 545, 668, 775, 775, 540, 228, 397, 150, 87, 375, 505, 240, 720, 860, 1123, 640, 395, 905, 1053, 1022, 980, 958, 1128, 1117, 1140, 1177, 1140, 1107, 1000, 918, 1183, 1115, 680, 635, 605, 725, 365, 113, 467];
seg(main, 0, 89, L, '#0f0', 1);
[[0, 1], [4, 10], [19, 20], [34, 37], [51, 53], [60, 61], [63, 65]].forEach(r => seg(main, r[0], r[1], L, '#00f', 1, 'stroke-dasharray="5 5"'));
[[2, 3], [11, 12], [16, 18], [25, 26], [28, 32], [43, 44], [48, 50], [55, 56], [58, 59], [66, 67], [70, 72], [77, 80], [82, 85], [87, 88]].forEach(r => seg(main, r[0], r[1], L, '#fff', 2));

// momentum bars: index, top, bottom
parse('0,688,698 1,660,696 2,633,680 3,600,656 4,572,629 5,558,605 6,552,584 29,1002,1010 30,980,1007 31,962,995 32,938,980 33,912,959 34,888,935 35,880,917 36,878,898 50,1012,1017 51,1008,1014 52,1003,1010 53,997,1007 54,988,1000 55,975,991 56,967,983 57,963,976 58,955,968 59,935,958 60,912,943 61,895,930 62,873,912 63,862,896 64,850,878 65,834,862 66,798,842 67,746,818 68,713,788 69,697,757 70,700,730 84,1018,1023 85,1014,1026 86,1000,1016 87,998,1015 88,965,1003 89,935,986').forEach(([i, a, b]) => {
  const x = Math.round(X(i)), y = Math.round(L(a));
  rect(x - 2, y, 5, Math.max(2, Math.round(L(b)) - y), '#fff');
  add(`<path d="M${x - 2} ${y}v-2l2.500-2 2.500 2v2z" fill="${i === 70 ? '#0f0' : '#f00'}"/>`);
});
parse('7,552,562 8,565,572 9,565,597 10,580,628 11,600,655 12,622,680 13,655,727 14,690,775 15,730,828 16,773,872 17,813,880 18,843,865 20,870,880 21,878,890 22,879,915 23,898,945 24,918,972 25,942,1000 26,966,1010 27,990,1027 28,1008,1020 37,880,890 38,888,900 39,893,915 40,905,930 41,916,948 42,930,965 43,948,985 44,963,997 45,975,1003 46,990,1016 47,1000,1014 48,1006,1018 49,1012,1020 71,712,722 72,715,740 73,724,768 74,744,803 75,771,840 76,801,880 77,837,919 78,874,948 79,909,975 80,940,990 81,966,1014 82,988,1032 83,1006,1032').forEach(([i, a, b]) => {
  const x = Math.round(X(i)), y = L(a), z = L(b);
  rect(x - 2, y, 5, Math.max(1, z - y - 2), '#00f');
  add(`<path d="M${x - 2} ${z - 3}h5v2l-2.500 2-2.500-2z" fill="${i === 18 || i === 28 ? '#f00' : '#0f0'}"/>`);
});
rect(115, 650, 1240, 5, '#ff0');
// sell columns
rect(311, 217, 2, 304, '#00f'); rect(310, 252, 4, 235, '#00f');
rect(514, 313, 3, 157, '#00f'); rect(513, 325, 5, 130, '#00f'); rect(512, 348, 7, 104, '#00f');
add('</g>');

// ---- annotations ----
add('<ellipse cx="313" cy="546" rx="7" ry="5" fill="#ff0"/><ellipse cx="529" cy="502" rx="8" ry="5" fill="#ff0"/>');
text(303, 160, 'A', '#ff0', 'cap'); text(508, 243, 'B', '#ff0', 'cap');
text(537, 173, 'A和B两点，主图和副图顾比均线都是空头发散，', '#00f', 'note');
text(595, 210, '特别是副图的资金顾比均线更是在多空分水岭线下空头发散', '#f00', 'note');
text(80, 356, '神奇线拐头下行', '#ff0', 'shout');
text(130, 403, '便是做空进场点', '#ff0', 'shout');
text(1084, 639, '多头分水岭', '#ff0', 'note');
text(112, 490, '菲尔泰勒金融工作室', '#f00');
text(50, 476, '用到未来函数', '#808080', 'small'); text(145, 476, '?', '#808080', 'small');
text(73, 174, '110.20', '#fff'); text(1253, 402, '104.56', '#fff');
poly([[70, 164], [55, 159]], '#fff'); add('<path d="M53 158l9 0-4 4z" fill="#fff"/>');
poly([[1251, 403], [1237, 408]], '#fff'); add('<path d="M1234 409l9-5 1 5z" fill="#fff"/>');
const arrow = (x1, y1, x2, y2, c) => {
  const a = Math.atan2(y2 - y1, x2 - x1), bx = x2 - 13 * Math.cos(a), by = y2 - 13 * Math.sin(a);
  line(x1, y1, bx, by, c, 3);
  const px = 5 * Math.sin(a), py = -5 * Math.cos(a);
  add(`<path d="M${x2} ${y2}L${bx + px} ${by + py}L${bx - px} ${by - py}z" fill="${c}"/>`);
};
arrow(532, 171, 440, 231, '#f00'); arrow(575, 184, 429, 304, '#f00');
arrow(240, 412, 302, 520, '#f00'); arrow(328, 413, 517, 495, '#f00');
arrow(633, 212, 399, 697, '#ff0'); arrow(726, 225, 391, 774, '#ff0');

// ---- axes ----
[[200, '110.00'], [334, '109.00'], [467, '108.00'], [601, '107.00'], [734, '106.00'], [869, '105.00']].forEach(([p, t]) => text(1406, U(p) + 7, t, '#808080', 'axis', 'text-anchor="end"'));
[[85, '100.00'], [211, '88.94'], [325, '79.16'], [439, '69.39'], [553, '59.61'], [667, '49.84'], [781, '40.07'], [895, '30.29'], [1009, '20.52'], [1123, '10.74'], [1209, '0.71']].forEach(([p, t]) => text(1406, L(p) + 8, t, '#808080', 'axis', 'text-anchor="end"'));
'6:30 17:45 19:00 20:15 21:30 22:45 7/1 1:15 2:30 3:45 5:00 7:15 8:30 9:45 11:00 12:15 13:30 14:45'.split(' ').forEach((t, k) => text(k ? Math.round(55 + 71.9 * k) : 64, 867, t, '#808080', 'axis'));
[[44, 'M11 5l-6 6 6 6M16 5l-6 6 6 6'], [1393, 'M5 5l6 6-6 6M10 5l6 6-6 6']].forEach(([x, d]) => add(`<g transform="translate(${x} 847)"><rect x=".5" y=".5" width="18" height="19" rx="2" fill="#070707" stroke="#555"/><path d="${d}" transform="translate(-1 -1)" fill="none" stroke="#aaa"/></g>`));
document.getElementById('chart').innerHTML = out.join('');

// ---- trades: time, price, direction, volume, volume side ----
const trades = '04:59 39 u 1|:10 39 - 1g|:16 41 u 1|:16 43 u 2|:16 44 u 4|:16 44 - 1|:17 44 - 1|:22 44 - 1|:27 44 - 1|:30 39 d 1g|:30 43 u 1|:31 43 - 1|:33 44 u 3|:33 45 u 1|:33 39 d 2g|:37 45 u 1|:38 45 - 2|:39 45 - 1|:40 45 - 6|:42 45 - 2|:47 46 u 1|:48 46 - 1|:49 46 - 1|:50 46 - 1|:52 46 - 1|:53 46 - 1|:54 46 - 1|:55 46 - 1|:56 46 - 1|:56 46 - 1|:58 46 - 1';
document.getElementById('ticks').innerHTML = trades.split('|').map(r => {
  const [t, p, d, v] = r.split(' ');
  const mark = d === '-' ? '' : `<svg width="11" height="15" viewBox="0 0 11 15"><path d="${d === 'u' ? 'M5.500 0 11 5H7v10H4V5H0z' : 'M5.500 15 0 10h4V0h3v10h4z'}" fill="${d === 'u' ? '#ff5a5a' : '#3de35c'}"/></svg>`;
  return `<tr><td>${t}</td><td>108.${p}${mark}</td><td class="${v.endsWith('g') ? 'dn' : ''}">${v[0]}</td></tr>`;
}).join('');
```
